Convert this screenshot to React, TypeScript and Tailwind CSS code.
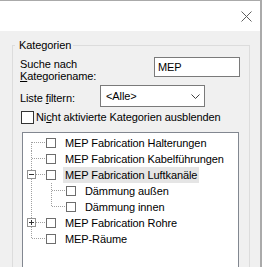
type Line = "first" | "mid" | "last";
type Toggle = "plus" | "minus";

const dot = "#a0a0a0";

function Toggler({ kind }: { kind: Toggle }) {
  return (
    <g shapeRendering="crispEdges">
      <rect x="4.5" y="3.5" width="8" height="8" fill="white" stroke="#919191" />
      <line x1="6" y1="7.5" x2="11" y2="7.5" stroke="#333" />
      {kind === "plus" && <line x1="8.5" y1="5" x2="8.5" y2="10" stroke="#333" />}
    </g>
  );
}

function RootGutter({ line, toggle }: { line: Line; toggle?: Toggle }) {
  const y1 = line === "first" ? 7 : 0;
  const y2 = line === "last" ? 8 : 16;
  return (
    <svg width="23" height="16" className="shrink-0" shapeRendering="crispEdges">
      <line x1="8.5" y1={y1} x2="8.5" y2={y2} stroke={dot} strokeDasharray="1 1" />
      <line x1={toggle ? 13 : 9} y1="7.5" x2="22" y2="7.5" stroke={dot} strokeDasharray="1 1" />
      {toggle && <Toggler kind={toggle} />}
    </svg>
  );
}

function ChildGutter({ last }: { last?: boolean }) {
  return (
    <svg width="43" height="16" className="shrink-0" shapeRendering="crispEdges">
      <line x1="8.5" y1="0" x2="8.5" y2="16" stroke={dot} strokeDasharray="1 1" />
      <line x1="28.5" y1="0" x2="28.5" y2={last ? 8 : 16} stroke={dot} strokeDasharray="1 1" />
      <line x1="29" y1="7.5" x2="42" y2="7.5" stroke={dot} strokeDasharray="1 1" />
    </svg>
  );
}

function TreeRow({
  label,
  child,
  line = "mid",
  toggle,
  selected,
}: {
  label: string;
  child?: "mid" | "last";
  line?: Line;
  toggle?: Toggle;
  selected?: boolean;
}) {
  return (
    <div className="flex items-center h-[16px]">
      {child ? <ChildGutter last={child === "last"} /> : <RootGutter line={line} toggle={toggle} />}
      <span className="w-[10px] h-[10px] border border-[#6d6d6d] bg-white shrink-0" />
      <span className={`ml-[7px] px-[2px] leading-[16px] h-[16px] whitespace-nowrap ${selected ? "bg-[#e5e5e5]" : ""}`}>
        {label}
      </span>
    </div>
  );
}

export default function App() {
  return (
    <div className="w-[262px] h-[267px] overflow-hidden bg-[#f0f0f0] border-t border-r-2 border-[#aaaaaa] font-['Liberation_Sans',Arial,sans-serif] text-[11px] tracking-[-0.1px] text-black flex flex-col">
      {/* title bar */}
      <div className="h-[30px] shrink-0 bg-white flex items-center justify-end pr-[8px]">
        <svg width="11" height="11" viewBox="0 0 11 11">
          <line x1="0.5" y1="0.5" x2="10.5" y2="10.5" stroke="#5f5f5f" />
          <line x1="10.5" y1="0.5" x2="0.5" y2="10.5" stroke="#5f5f5f" />
        </svg>
      </div>

      <fieldset className="ml-[12px] mt-[7px] w-[238px] border border-[#dcdcdc] shrink-0">
        <legend className="ml-[2px] pl-[4px] pr-[2px] leading-[14px]">Kategorien</legend>

        <div className="flex justify-between items-start pt-[5px] pl-[7px] pr-[9px]">
          <div className="leading-[12px] pt-[1px]">
            Suche nach
            <br />
            <u>K</u>ategoriename:
          </div>
          <input
            defaultValue="MEP"
            className="w-[86px] h-[20px] border border-[#7a7a7a] bg-white pl-[3px] outline-none"
          />
        </div>

        <div className="flex items-start mt-[3px] pl-[7px]">
          <div className="w-[80px] pt-[7px] leading-[13px]">
            Liste <u>f</u>iltern:
          </div>
          <div className="w-[105px] h-[22px] border border-[#7a7a7a] bg-white flex items-center justify-between pl-[5px] pr-[4px]">
            <span>&lt;Alle&gt;</span>
            <svg width="9" height="5" viewBox="0 0 9 5">
              <polyline points="0.5,0.5 4.5,4.5 8.5,0.5" fill="none" stroke="#404040" />
            </svg>
          </div>
        </div>

        <label className="flex items-center mt-[4px] ml-[8px] h-[13px]">
          <span className="w-[13px] h-[13px] border border-[#333333] bg-white shrink-0" />
          <span className="ml-[2px] whitespace-nowrap">
            Ni<u>c</u>ht aktivierte Kategorien ausblenden
          </span>
        </label>

        <div className="mt-[8px] ml-[9px] w-[217px] h-[140px] border border-[#828790] bg-white pt-[2px]">
          <TreeRow label="MEP Fabrication Halterungen" line="first" />
          <TreeRow label="MEP Fabrication Kabelführungen" />
          <TreeRow label="MEP Fabrication Luftkanäle" toggle="minus" selected />
          <TreeRow label="Dämmung außen" child="mid" />
          <TreeRow label="Dämmung innen" child="last" />
          <TreeRow label="MEP Fabrication Rohre" toggle="plus" />
          <TreeRow label="MEP-Räume" line="last" />
        </div>
      </fieldset>
    </div>
  );
}
